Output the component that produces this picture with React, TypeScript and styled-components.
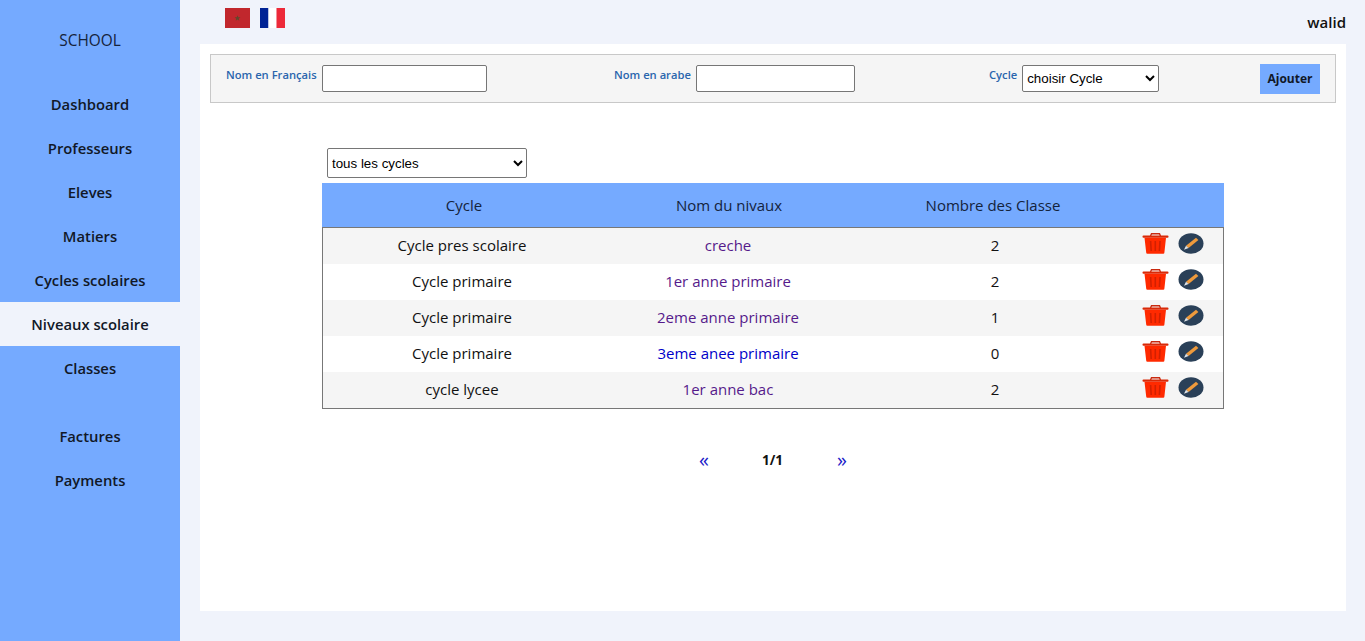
import React from 'react';
import styled, { createGlobalStyle } from 'styled-components';

const GlobalStyle = createGlobalStyle`
  html, body {
    margin: 0;
    padding: 0;
    height: 100%;
    background: #f0f3fb;
    font-family: "Open Sans", "Noto Sans", sans-serif;
    color: #111;
    overflow: hidden;
  }
`;

const menuTop = ['Dashboard', 'Professeurs', 'Eleves', 'Matiers', 'Cycles scolaires', 'Niveaux scolaire', 'Classes'];
const menuBottom = ['Factures', 'Payments'];

const rows = [
  { cycle: 'Cycle pres scolaire', name: 'creche', count: 2, visited: true },
  { cycle: 'Cycle primaire', name: '1er anne primaire', count: 2, visited: true },
  { cycle: 'Cycle primaire', name: '2eme anne primaire', count: 1, visited: true },
  { cycle: 'Cycle primaire', name: '3eme anee primaire', count: 0, visited: false },
  { cycle: 'cycle lycee', name: '1er anne bac', count: 2, visited: true },
];

const TrashIcon = () => (
  <svg width="27" height="21" viewBox="0 0 27 21">
    <path d="M8.5 3 L9.5 0.7 H17.5 L18.5 3" fill="none" stroke="#c92a10" strokeWidth="1.4" />
    <rect x="0.5" y="2.6" width="26" height="2.2" rx="1" fill="#d92a08" />
    <path d="M2.5 4.8 H24 L22.4 19.6 a1.2 1.2 0 0 1 -1.2 1.2 H5.4 a1.2 1.2 0 0 1 -1.2 -1.2 Z" fill="#ff2a00" />
    <path d="M8.6 8 L9.2 18 M13.3 8 V18 M18 8 L17.4 18" stroke="#d32000" strokeWidth="1.6" />
  </svg>
);

const PencilIcon = () => (
  <svg width="26" height="21" viewBox="0 0 26 21">
    <ellipse cx="13" cy="10.5" rx="12.5" ry="10.2" fill="#2a4058" />
    <path d="M18 4.8 L20.4 7 L10.6 15 L8 12.8 Z" fill="#ee9a3c" />
    <path d="M8 12.8 L10.6 15 L6 16.8 Z" fill="#dfe3e8" />
  </svg>
);

const MoroccoFlag = () => (
  <svg width="25" height="20" viewBox="0 0 25 20">
    <rect width="25" height="20" fill="#c1272d" />
    <path d="M12.5 7.2 L13.3 9.3 L15.4 9.3 L13.7 10.7 L14.3 12.8 L12.5 11.5 L10.7 12.8 L11.3 10.7 L9.6 9.3 L11.7 9.3 Z" fill="#5f4a2c" />
  </svg>
);

const FranceFlag = () => (
  <svg width="25" height="20" viewBox="0 0 25 20">
    <rect width="8.5" height="20" fill="#002395" />
    <rect x="8.5" width="8" height="20" fill="#fff" />
    <rect x="16.5" width="8.5" height="20" fill="#ed2939" />
  </svg>
);

const App = () => {
  return (
    <Page>
      <GlobalStyle />
      <Sidebar>
        <Brand>SCHOOL</Brand>
        <MenuGroup>
          {menuTop.map((item) => (
            <MenuItem key={item} active={item === 'Niveaux scolaire'}>
              {item}
            </MenuItem>
          ))}
        </MenuGroup>
        <MenuGroup>
          {menuBottom.map((item) => (
            <MenuItem key={item}>{item}</MenuItem>
          ))}
        </MenuGroup>
      </Sidebar>
      <Main>
        <TopBar>
          <Flags>
            <MoroccoFlag />
            <FranceFlag />
          </Flags>
          <UserName>walid</UserName>
        </TopBar>
        <Panel>
          <FormBar>
            <Field>
              <FieldLabel>Nom en Français</FieldLabel>
              <TextInput width={165} />
            </Field>
            <Field>
              <FieldLabel>Nom en arabe</FieldLabel>
              <TextInput width={159} />
            </Field>
            <Field>
              <FieldLabel>Cycle</FieldLabel>
              <FormSelect>
                <option>choisir Cycle</option>
              </FormSelect>
            </Field>
            <AddButton>Ajouter</AddButton>
          </FormBar>
          <TableArea>
            <FilterSelect>
              <option>tous les cycles</option>
            </FilterSelect>
            <HeaderRow>
              <span>Cycle</span>
              <span>Nom du nivaux</span>
              <span>Nombre des Classe</span>
            </HeaderRow>
            <TableBody>
              {rows.map((row, i) => (
                <BodyRow key={i} striped={i % 2 === 0}>
                  <span>{row.cycle}</span>
                  <LevelLink visited={row.visited}>{row.name}</LevelLink>
                  <span>{row.count}</span>
                  <Actions>
                    <TrashIcon />
                    <PencilIcon />
                  </Actions>
                </BodyRow>
              ))}
            </TableBody>
            <Pager>
              <PagerArrow>«</PagerArrow>
              <PagerText>1/1</PagerText>
              <PagerArrow>»</PagerArrow>
            </Pager>
          </TableArea>
        </Panel>
      </Main>
    </Page>
  );
};

const Page = styled.div`
  display: flex;
  width: 1365px;
  height: 641px;
`;

const Sidebar = styled.aside`
  width: 180px;
  flex-shrink: 0;
  background: #75aaff;
  display: flex;
  flex-direction: column;
`;

const Brand = styled.div`
  font-size: 15.4px;
  text-align: center;
  padding-top: 31px;
  height: 51px;
  line-height: 20px;
  color: #16233a;
`;

const MenuGroup = styled.nav`
  display: flex;
  flex-direction: column;
  margin-bottom: 24px;
`;

const MenuItem = styled.div<{ active?: boolean }>`
  height: 44px;
  line-height: 44px;
  text-align: center;
  font-size: 14.8px;
  font-weight: 600;
  color: #111827;
  background: ${(props) => (props.active ? '#f0f3fb' : 'transparent')};
`;

const Main = styled.main`
  flex: 1;
  display: flex;
  flex-direction: column;
`;

const TopBar = styled.header`
  height: 44px;
  display: flex;
  justify-content: space-between;
  padding: 8px 19px 0 45px;
  box-sizing: border-box;
`;

const Flags = styled.div`
  display: flex;
  gap: 10px;
  height: 20px;
`;

const UserName = styled.div`
  font-size: 15px;
  font-weight: 600;
  line-height: 28px;
`;

const Panel = styled.section`
  margin-left: 20px;
  width: 1146px;
  height: 567px;
  background: #fff;
  padding: 10px;
  box-sizing: border-box;
`;

const FormBar = styled.form`
  height: 49px;
  box-sizing: border-box;
  border: 1px solid #c8c8c8;
  background: #f5f5f5;
  padding-left: 15px;
  display: grid;
  grid-template-columns: 388px 375px 271px 60px;
  align-items: center;
`;

const Field = styled.div`
  display: flex;
  align-items: center;
  gap: 5px;
`;

const FieldLabel = styled.label`
  font-size: 11.2px;
  font-weight: 600;
  color: #2a65ad;
  margin-top: -9px;
`;

const TextInput = styled.input<{ width: number }>`
  width: ${(props) => props.width}px;
  height: 27px;
  box-sizing: border-box;
  border: 1px solid #767676;
  border-radius: 2px;
  background: #fff;
  padding: 1px 2px;
`;

const FormSelect = styled.select`
  width: 137px;
  height: 27px;
  font-family: "Liberation Sans", Arial, sans-serif;
  font-size: 13.33px;
  background: #fff;
  border: 1px solid #767676;
  border-radius: 2px;
  color: #000;
`;

const AddButton = styled.div`
  width: 60px;
  height: 30px;
  line-height: 30px;
  text-align: center;
  background: #75aaff;
  font-size: 12px;
  font-weight: 700;
  color: #111827;
`;

const TableArea = styled.div`
  margin: 45px 0 0 112px;
  width: 902px;
`;

const FilterSelect = styled.select`
  display: block;
  margin: 0 0 5px 5px;
  width: 200px;
  height: 30px;
  font-family: "Liberation Sans", Arial, sans-serif;
  font-size: 13.33px;
  background: #fff;
  border: 1px solid #767676;
  border-radius: 2px;
  color: #000;
`;

const HeaderRow = styled.div`
  height: 44px;
  background: #75aaff;
  display: grid;
  grid-template-columns: 284px 246px 282px 90px;
  align-items: center;
  text-align: center;
  font-size: 15px;
  color: #14233c;
`;

const TableBody = styled.div`
  border: 1px solid #777;
`;

const BodyRow = styled.div<{ striped: boolean }>`
  height: 36px;
  padding-bottom: 3px;
  box-sizing: border-box;
  background: ${(props) => (props.striped ? '#f5f5f5' : '#fff')};
  display: grid;
  grid-template-columns: 278px 254px 280px 88px;
  align-items: center;
  text-align: center;
  font-size: 15px;
  color: #111;
`;

const LevelLink = styled.span<{ visited: boolean }>`
  color: ${(props) => (props.visited ? '#551a8b' : '#0000c8')};
`;

const Actions = styled.div`
  display: flex;
  gap: 9px;
  padding-left: 7px;
  margin-top: -2px;
  align-items: flex-start;
`;

const Pager = styled.div`
  margin: 39px 0 0 377px;
  display: grid;
  grid-template-columns: 63px 75px auto;
  align-items: center;
`;

const PagerArrow = styled.span`
  font-size: 20px;
  color: #1a1ac8;
  line-height: 24px;
`;

const PagerText = styled.span`
  font-size: 13.5px;
  font-weight: 700;
`;

export default App;
